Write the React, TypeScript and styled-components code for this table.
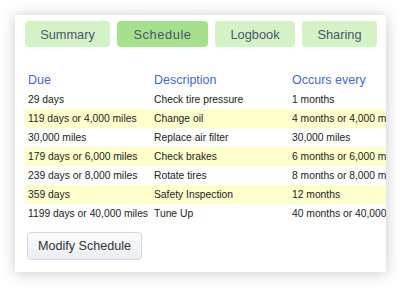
import React from "react";
import styled, { createGlobalStyle } from "styled-components";

const Global = createGlobalStyle`
  html, body {
    margin: 0;
    padding: 0;
    background: #ffffff;
  }
  body {
    font-family: "Liberation Sans", Arial, sans-serif;
  }
`;

const Page = styled.div`
  padding: 15px 15px 18px 15px;
  width: 401px;
  box-sizing: border-box;
`;

const Card = styled.div`
  width: 371px;
  height: 257px;
  box-sizing: border-box;
  background: #ffffff;
  box-shadow: 0 1px 14px rgba(0, 0, 0, 0.22);
  padding: 6px 0 0 10px;
  overflow: hidden;
  display: flex;
  flex-direction: column;
`;

const Tabs = styled.div`
  display: flex;
  gap: 7px;
`;

const Tab = styled.div<{ $active?: boolean; $w: number }>`
  width: ${(p) => p.$w}px;
  height: 26px;
  border-radius: 4px;
  background: ${(p) => (p.$active ? "#a5e08c" : "#d3f3c7")};
  color: #4b5570;
  font-size: 12.8px;
  letter-spacing: ${(p) => (p.$active ? "0.6px" : "0")};
  display: flex;
  align-items: center;
  justify-content: center;
  padding-top: 1px;
  box-sizing: border-box;
`;

const Table = styled.table`
  border-collapse: collapse;
  margin-top: 23px;
  width: 420px;
  table-layout: fixed;
`;

const HeadCell = styled.th<{ $w?: number }>`
  width: ${(p) => (p.$w ? `${p.$w}px` : "auto")};
  text-align: left;
  font-weight: normal;
  color: #4768c6;
  font-size: 12.5px;
  padding: 0 3px;
  height: 20px;
  vertical-align: top;
  line-height: 20px;
  white-space: nowrap;
`;

const Row = styled.tr<{ $alt?: boolean }>`
  background: ${(p) => (p.$alt ? "#ffffcc" : "transparent")};
`;

const Cell = styled.td`
  font-size: 10.3px;
  color: #222222;
  padding: 0 3px;
  height: 19px;
  line-height: 19px;
  white-space: nowrap;
  overflow: visible;
`;

const Button = styled.button`
  align-self: flex-start;
  margin: 9px 0 0 2px;
  width: 115px;
  height: 28px;
  border: 1px solid #d3d8e0;
  border-radius: 4px;
  background: linear-gradient(#fbfcfd, #e9eef4);
  font-family: "Liberation Sans", Arial, sans-serif;
  font-size: 12.6px;
  color: #333333;
  padding: 0;
`;

const tabs = [
  { label: "Summary", w: 85 },
  { label: "Schedule", w: 91, active: true },
  { label: "Logbook", w: 80 },
  { label: "Sharing", w: 75 },
];

const rows = [
  ["29 days", "Check tire pressure", "1 months"],
  ["119 days or 4,000 miles", "Change oil", "4 months or 4,000 miles"],
  ["30,000 miles", "Replace air filter", "30,000 miles"],
  ["179 days or 6,000 miles", "Check brakes", "6 months or 6,000 miles"],
  ["239 days or 8,000 miles", "Rotate tires", "8 months or 8,000 miles"],
  ["359 days", "Safety Inspection", "12 months"],
  ["1199 days or 40,000 miles", "Tune Up", "40 months or 40,000 miles"],
];

export default function App() {
  return (
    <Page>
      <Global />
      <Card>
        <Tabs>
          {tabs.map((t) => (
            <Tab key={t.label} $active={t.active} $w={t.w}>
              {t.label}
            </Tab>
          ))}
        </Tabs>
        <Table>
          <thead>
            <tr>
              <HeadCell $w={120}>Due</HeadCell>
              <HeadCell $w={132}>Description</HeadCell>
              <HeadCell>Occurs every</HeadCell>
            </tr>
          </thead>
          <tbody>
            {rows.map((r, i) => (
              <Row key={i} $alt={i % 2 === 1}>
                <Cell>{r[0]}</Cell>
                <Cell>{r[1]}</Cell>
                <Cell>{r[2]}</Cell>
              </Row>
            ))}
          </tbody>
        </Table>
        <Button>Modify Schedule</Button>
      </Card>
    </Page>
  );
}
